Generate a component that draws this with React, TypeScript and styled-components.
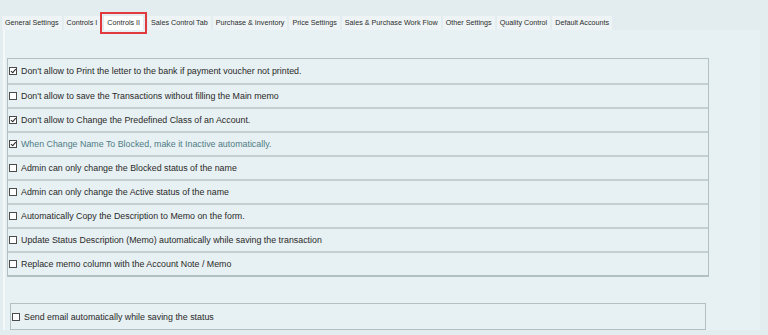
import React from 'react';
import styled, { createGlobalStyle } from 'styled-components';

const GlobalStyle = createGlobalStyle`
  html, body {
    margin: 0;
    padding: 0;
    background: #e3edef;
    font-family: "Liberation Sans", Arial, sans-serif;
  }
`;

const Page = styled.div`
  width: 768px;
  height: 335px;
  overflow: hidden;
  background: #e3edef;
  padding-top: 16px;
  box-sizing: border-box;
`;

const TabStrip = styled.div`
  display: flex;
  align-items: flex-end;
  padding-left: 2px;
  height: 14px;
`;

const Tab = styled.div<{ active?: boolean }>`
  position: relative;
  height: 14px;
  padding: 0 3px;
  margin-right: 2px;
  background: ${({ active }) => (active ? '#ffffff' : '#eef4f5')};
  font-size: 7.2px;
  line-height: 14px;
  color: #2b2b2b;
  white-space: nowrap;
  ${({ active }) =>
    active &&
    `
    margin: 0 5px 0 2px;
    &::after {
      content: '';
      position: absolute;
      left: -4px;
      right: -4px;
      top: -4px;
      bottom: -4px;
      border: 2px solid #e0393e;
    }
  `}
`;

const Panel = styled.div`
  margin: 0 8px 0 3px;
  height: 300px;
  background: #e7f0f2;
  border-left: 2px solid #f4f8f9;
  padding: 28px 0 0 2px;
  box-sizing: border-box;
`;

const Group = styled.div`
  width: 700px;
  border: 1px solid #b3c0c2;
  border-bottom-width: 2px;
`;

const Row = styled.div<{ muted?: boolean }>`
  height: 24px;
  display: flex;
  align-items: center;
  gap: 4px;
  padding-left: 1px;
  box-sizing: border-box;
  font-size: 8.85px;
  color: ${({ muted }) => (muted ? '#4f7c86' : '#2a2a2a')};
  & + & {
    border-top: 2px solid #c3cfd1;
  }
`;

const Box = styled.span<{ checked?: boolean }>`
  width: 8px;
  height: 8px;
  border: 1px solid #4a4a4a;
  background: #ffffff;
  box-sizing: border-box;
  flex: none;
  position: relative;
  &::after {
    content: '';
    display: ${({ checked }) => (checked ? 'block' : 'none')};
    position: absolute;
    left: 1.5px;
    top: 0px;
    width: 2px;
    height: 3.5px;
    border: solid #222;
    border-width: 0 1.2px 1.2px 0;
    transform: rotate(40deg);
  }
`;

const Spacer = styled.div`
  height: 26px;
`;

const SingleGroup = styled(Group)`
  width: 694px;
  margin-left: 3px;
  border-bottom-width: 1px;
  height: 25px;
  display: flex;
  align-items: center;
  & > ${Row} {
    height: 23px;
  }
`;

const tabs = [
  'General Settings',
  'Controls I',
  'Controls II',
  'Sales Control Tab',
  'Purchase & Inventory',
  'Price Settings',
  'Sales & Purchase Work Flow',
  'Other Settings',
  'Quality Control',
  'Default Accounts',
];

const options = [
  { text: "Don't allow to Print the letter to the bank if payment voucher not printed.", checked: true },
  { text: "Don't allow to save the Transactions without filling the Main memo" },
  { text: "Don't allow to Change the Predefined Class of an Account.", checked: true },
  { text: 'When Change Name To Blocked, make it Inactive automatically.', checked: true, muted: true },
  { text: 'Admin can only change the Blocked status of the name' },
  { text: 'Admin can only change the Active status of the name' },
  { text: 'Automatically Copy the Description to Memo on the form.' },
  { text: 'Update Status Description (Memo) automatically while saving the transaction' },
  { text: 'Replace memo column with the Account Note / Memo' },
];

const App = () => {
  return (
    <Page>
      <GlobalStyle />
      <TabStrip>
        {tabs.map((t) => (
          <Tab key={t} active={t === 'Controls II'}>
            {t}
          </Tab>
        ))}
      </TabStrip>
      <Panel>
        <Group>
          {options.map((o) => (
            <Row key={o.text} muted={o.muted}>
              <Box checked={o.checked} />
              {o.text}
            </Row>
          ))}
        </Group>
        <Spacer />
        <SingleGroup>
          <Row>
            <Box />
            Send email automatically while saving the status
          </Row>
        </SingleGroup>
      </Panel>
    </Page>
  );
};

export default App;
